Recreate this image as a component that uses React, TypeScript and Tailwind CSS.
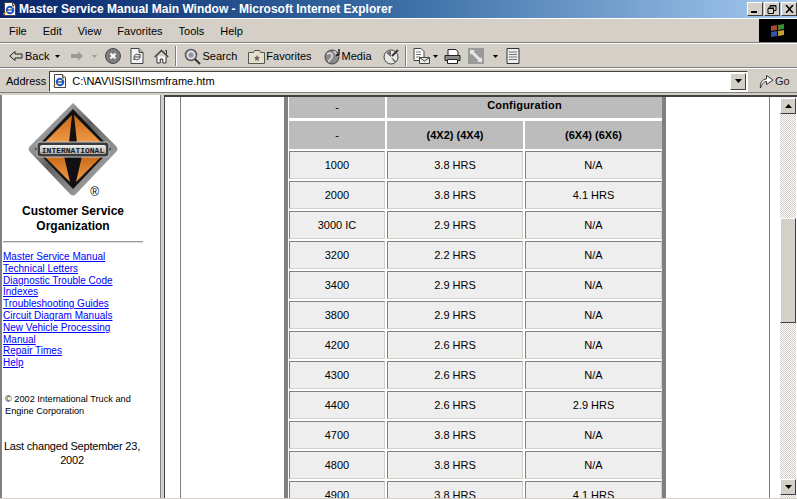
import type { ReactNode } from "react";

const IeLogo = () => (
  <svg width="16" height="16" viewBox="0 0 16 16" className="shrink-0">
    <path d="M2.500 1.500h8l3 3v10h-11z" fill="#fff" stroke="#444" />
    <path d="M10.500 1.500v3h3" fill="#ccc" stroke="#444" />
    <circle cx="8" cy="9" r="3.300" fill="none" stroke="#1858d0" strokeWidth="2" />
    <path d="M5 9h6" stroke="#1858d0" strokeWidth="1.500" />
    <path d="M1 13c4-1 9-6 12-9" fill="none" stroke="#e0a020" />
  </svg>
);

const links = [
  "Master Service Manual",
  "Technical Letters",
  "Diagnostic Trouble Code Indexes",
  "Troubleshooting Guides",
  "Circuit Diagram Manuals",
  "New Vehicle Processing Manual",
  "Repair Times",
  "Help",
];

const rows = [
  ["1000", "3.8 HRS", "N/A"],
  ["2000", "3.8 HRS", "4.1 HRS"],
  ["3000 IC", "2.9 HRS", "N/A"],
  ["3200", "2.2 HRS", "N/A"],
  ["3400", "2.9 HRS", "N/A"],
  ["3800", "2.9 HRS", "N/A"],
  ["4200", "2.6 HRS", "N/A"],
  ["4300", "2.6 HRS", "N/A"],
  ["4400", "2.6 HRS", "2.9 HRS"],
  ["4700", "3.8 HRS", "N/A"],
  ["4800", "3.8 HRS", "N/A"],
  ["4900", "3.8 HRS", "4.1 HRS"],
];

const raised = "border border-t-white border-l-white border-r-[#404040] border-b-[#404040] bg-[#d4d0c8]";

function WinButton({ children }: { children: ReactNode }) {
  return <div className={`w-[16px] h-[14px] flex items-center justify-center ${raised}`}>{children}</div>;
}

function Arrow({ dir }: { dir: "up" | "down" }) {
  return (
    <svg width="7" height="4" viewBox="0 0 7 4">
      <path d={dir === "up" ? "M3.500 0L7 4H0z" : "M0 0h7L3.500 4z"} fill="#000" />
    </svg>
  );
}

function Caret({ color = "#000", className }: { color?: string; className: string }) {
  return (
    <svg width="5" height="3" viewBox="0 0 5 3" className={`shrink-0 ${className}`}>
      <path d="M0 0h5L2.500 3z" fill={color} />
    </svg>
  );
}

function Separator({ className }: { className: string }) {
  return <div className={`${className} w-[2px] h-[20px] border-l border-l-[#808080] border-r border-r-white`} />;
}

function TitleBar() {
  return (
    <div className="h-[18px] shrink-0 flex items-center pl-[2px] bg-gradient-to-r from-[#0a246a] via-[#3a6ea5] to-[#a6caf0]">
      <IeLogo />
      <span className="ml-[1px] text-white font-bold text-[12px] leading-none whitespace-nowrap">
        Master Service Manual Main Window - Microsoft Internet Explorer
      </span>
      <div className="ml-auto flex">
        <WinButton>
          <div className="w-[6px] h-[2px] bg-black mt-[6px] mr-[3px]" />
        </WinButton>
        <div className="ml-[1px]">
          <WinButton>
            <svg width="10" height="9" viewBox="0 0 10 9" fill="none" stroke="#000">
              <path d="M3 2.500V.5h6v5H7M1 3.500h5.500v5H1z" />
              <path d="M3 1h6M1 3h6" />
            </svg>
          </WinButton>
        </div>
        <div className="ml-[1px]">
          <WinButton>
            <svg width="9" height="8" viewBox="0 0 9 8" stroke="#000" strokeWidth="1.500">
              <path d="M1 0l7 8M8 0L1 8" />
            </svg>
          </WinButton>
        </div>
      </div>
    </div>
  );
}

function MenuBar() {
  return (
    <div className="h-[25px] shrink-0 flex items-stretch border-t border-t-white border-b border-b-[#808080]">
      <div className="flex-1 flex items-center text-[11px] text-black pl-[9px] pt-[1px] gap-[16px]">
        <span>File</span>
        <span>Edit</span>
        <span>View</span>
        <span>Favorites</span>
        <span>Tools</span>
        <span>Help</span>
      </div>
      <div className="w-[38px] bg-black flex items-center justify-center">
        <svg width="16" height="15" viewBox="0 0 16 15">
          <path d="M1 3l6-1v5l-6 1z" fill="#a84a30" />
          <path d="M8 2l6-1v5l-6 1z" fill="#3f8a3a" />
          <path d="M1 9l6-1v5l-6 1z" fill="#3455a8" />
          <path d="M8 8l6-1v5l-6 1z" fill="#c8a030" />
        </svg>
      </div>
    </div>
  );
}

function ToolBar() {
  return (
    <div className="h-[25px] shrink-0 flex items-center border-t border-t-white border-b border-b-[#808080] text-[11px] text-black pl-[9px] pt-[1px]">
      <svg width="14" height="12" viewBox="0 0 14 12" fill="#d4d0c8" stroke="#222" className="shrink-0">
        <path d="M.8 6L6 1.500V4h7v4H6v2.500z" />
      </svg>
      <span className="ml-[2px]">Back</span>
      <Caret className="ml-[6px]" />
      {/* forward, greyed out */}
      <svg width="14" height="12" viewBox="0 0 14 12" fill="#9a9a9a" className="ml-[10px] shrink-0">
        <path d="M13.200 6L8 1.500V4H1v4h7v2.500z" />
      </svg>
      <Caret color="#999" className="ml-[8px]" />
      <svg width="16" height="16" viewBox="0 0 16 16" className="ml-[8px] shrink-0">
        <circle cx="8" cy="8" r="7.500" fill="#7d7d7d" stroke="#4a4a4a" />
        <path d="M5.500 5.500l5 5M10.500 5.500l-5 5" stroke="#fff" strokeWidth="2" />
      </svg>
      <svg width="14" height="16" viewBox="0 0 14 16" className="ml-[9px] shrink-0">
        <path d="M1 .5h8l4 4v11H1z" fill="#f4f4f4" stroke="#444" />
        <path d="M9 .5v4h4" fill="#bbb" stroke="#444" />
        <path d="M4 9a3 3 0 0 1 5-2l1-1v3H7M10 9a3 3 0 0 1-5 2l-1 1V9h3" fill="none" stroke="#444" />
      </svg>
      <svg width="15" height="15" viewBox="0 0 15 15" className="ml-[10px] shrink-0" fill="#fff" stroke="#333">
        <path d="M.8 8L7.500 1.500 14.200 8" fill="none" strokeWidth="1.300" />
        <path d="M3 7.500V14h3.200v-4h2.600v4H12V7.500" />
        <path d="M11 1.500h1.500V5" fill="none" />
      </svg>
      <Separator className="ml-[6px]" />
      <svg width="17" height="17" viewBox="0 0 17 17" className="ml-[7px] shrink-0" fill="none">
        <circle cx="7" cy="7" r="5.500" fill="#d8dce0" stroke="#555" strokeWidth="1.500" />
        <circle cx="7" cy="7" r="2.500" fill="#8f959c" />
        <path d="M11 11l5 5" stroke="#333" strokeWidth="2" />
      </svg>
      <span className="ml-[1px]">Search</span>
      <svg width="17" height="15" viewBox="0 0 17 15" className="ml-[11px] shrink-0">
        <path d="M.5 3.500h5l1-2h5l1 2h4v11H.5z" fill="#e4e0cc" stroke="#555" />
        <path d="M9 6l1 2 2 .3-1.500 1.500.4 2.200L9 11l-1.900 1 .4-2.200L6 8.300 8 8z" fill="#666" />
      </svg>
      <span className="ml-[1px]">Favorites</span>
      <svg width="18" height="17" viewBox="0 0 18 17" className="ml-[12px] shrink-0">
        <circle cx="8" cy="9" r="7" fill="#8a8a8a" stroke="#444" />
        <path d="M3 6c3-2 6 0 5 3S4 11 5 14M10 3c1 2 4 3 4 6" fill="none" stroke="#ddd" strokeWidth="1.600" />
        <path d="M15 1v6" stroke="#222" strokeWidth="1.500" />
        <circle cx="13.500" cy="7" r="1.500" fill="#222" />
      </svg>
      <span>Media</span>
      <svg width="17" height="17" viewBox="0 0 17 17" className="ml-[11px] shrink-0">
        <circle cx="8" cy="9" r="7" fill="#e8e8e8" stroke="#444" />
        <path d="M8 9L3.500 5A6 6 0 0 1 8 3zM8 9l3 5 2-1z" fill="#666" />
        <path d="M9 8l6-6" stroke="#333" strokeWidth="2" />
      </svg>
      <Separator className="ml-[5px]" />
      <svg width="17" height="16" viewBox="0 0 17 16" className="ml-[6px] shrink-0" fill="#fff" stroke="#444">
        <path d="M1 .5h7l3 3v9H1z" />
        <path d="M3 4h5M3 6.500h5M3 9h4" stroke="#777" />
        <path d="M6.500 9.500h10v6h-10z" fill="#e8e8e8" />
        <path d="M6.500 9.500l5 3.500 5-3.500" fill="none" />
      </svg>
      <Caret className="ml-[3px]" />
      <svg width="17" height="15" viewBox="0 0 17 15" className="ml-[6px] shrink-0" stroke="#222">
        <path d="M4 6V.5h8L14 3v3" fill="#fff" />
        <path d="M1 6.500h15v5H1z" fill="#8c8c8c" />
        <path d="M3.500 10.500h10v4h-10z" fill="#fff" />
      </svg>
      <svg width="16" height="16" viewBox="0 0 16 16" className="ml-[7px] shrink-0">
        <path d="M0 0h16v16H0z" fill="#9a9a9a" />
        <path d="M2 2h5L5.500 3.500l7 7L14 9v5H9l1.500-1.500-7-7L2 7z" fill="#e8e8e8" />
      </svg>
      <Caret className="ml-[9px]" />
      <svg width="15" height="16" viewBox="0 0 15 16" className="ml-[8px] shrink-0" fill="#eee" stroke="#333">
        <path d="M1 .5h12v15H1z" />
        <path d="M3 4h8M3 6.500h8M3 9h8M3 11.500h8" stroke="#777" />
      </svg>
    </div>
  );
}

function AddressBar() {
  return (
    <div className="h-[25px] shrink-0 flex items-center border-t border-t-white border-b border-b-[#808080] text-[11px] text-black pl-[6px] pt-[1px]">
      <span>Address</span>
      <div className="ml-[3px] flex-1 h-[21px] flex items-center bg-white border border-t-[#404040] border-l-[#404040] border-r-white border-b-white pl-[2px]">
        <IeLogo />
        <span className="ml-[4px]">C:\NAV\ISISII\msmframe.htm</span>
        <div className={`ml-auto mr-[1px] w-[16px] h-[17px] flex items-center justify-center ${raised}`}>
          <Arrow dir="down" />
        </div>
      </div>
      <div className="w-[49px] flex items-center pl-[11px] text-[#222]">
        <svg width="15" height="16" viewBox="0 0 15 16" fill="#fff" stroke="#333" className="shrink-0">
          <path d="M1.500 15c-1-5 2-9 6-9V2.500L14 7l-6.500 4.500V8.500c-3 0-4.500 2.500-6 6.500z" />
        </svg>
        <span className="ml-[1px]">Go</span>
      </div>
    </div>
  );
}

function Logo() {
  return (
    <svg width="90" height="94" viewBox="0 0 90 94" className="block">
      <defs>
        <linearGradient id="rim" x1="0" y1="0" x2="1" y2="1">
          <stop offset="0" stopColor="#e4e4e4" />
          <stop offset="0.45" stopColor="#5f5f5f" />
          <stop offset="1" stopColor="#c4c4c4" />
        </linearGradient>
        <linearGradient id="panel" x1="0" y1="0" x2="0" y2="1">
          <stop offset="0" stopColor="#c86a18" />
          <stop offset="1" stopColor="#f09a48" />
        </linearGradient>
        <linearGradient id="band" x1="0" y1="0" x2="0" y2="1">
          <stop offset="0" stopColor="#f0f0f0" />
          <stop offset="1" stopColor="#a8a8a8" />
        </linearGradient>
      </defs>
      <path d="M45 1L88 44Q91 47 88 50L48 92Q45 95 42 92L2 50Q-1 47 2 44z" fill="url(#rim)" />
      <path d="M45 7L83 47 45 87 7 47z" fill="#111" />
      <path d="M44 13L16 41H41zM46 13L74 41H49z" fill="url(#panel)" />
      <path d="M16 54H36L42 80zM74 54H54L48 80z" fill="url(#panel)" />
      <rect x="9" y="40" width="72" height="15" rx="3" fill="#3c3c3c" stroke="#c8c8c8" />
      <rect x="12" y="43" width="66" height="9" rx="2" fill="url(#band)" />
      <text x="45" y="50.500" textAnchor="middle" fontSize="8" fontWeight="700" fill="#1a1a1a" fontFamily="Liberation Mono, monospace">
        INTERNATIONAL
      </text>
    </svg>
  );
}

function LeftFrame() {
  return (
    <div className="w-[161px] shrink-0 border-l-2 border-l-[#808080] border-r border-r-[#808080] bg-white text-black pl-[1px] overflow-hidden">
      <div className="flex flex-col items-center w-[140px]">
        <div className="mt-[7px] mr-[1px]">
          <Logo />
        </div>
        <span className="self-end mr-[44px] -mt-[11px] text-[12px] leading-[14px]">®</span>
        <div className="mt-[5px] text-center font-bold text-[12px] leading-[15px]">
          Customer Service
          <br />
          Organization
        </div>
        <div className="mt-[7px] w-full h-[2px] bg-[#9a9a9a] border-b border-b-[#ddd]" />
      </div>
      <div className="mt-[8px] w-[122px] text-[10px] leading-[11.8px] text-[#0000ff]">
        {links.map((link) => (
          <a key={link} className="block underline">
            {link}
          </a>
        ))}
      </div>
      <div className="mt-[24px] ml-[2px] w-[136px] text-[9.200px] leading-[12px]">
        © 2002 International Truck and Engine Corporation
      </div>
      <div className="mt-[22px] -ml-[1px] w-[140px] text-center text-[11px] leading-[14px] tracking-[-0.2px]">
        Last changed September 23, 2002
      </div>
    </div>
  );
}

function HeaderCell({ children, bold, className }: { children: ReactNode; bold?: boolean; className: string }) {
  return (
    <div className={`${className} bg-[#bdbcbc] flex items-center justify-center text-[11px] ${bold ? "font-bold" : ""}`}>
      {children}
    </div>
  );
}

function Cell({ children, className }: { children: ReactNode; className: string }) {
  return (
    <div className={`${className} h-[28px] bg-[#eeeeee] border border-t-[#808080] border-l-[#808080] border-r-[#d4d0c8] border-b-[#d4d0c8] flex items-center justify-center text-[11px]`}>
      {children}
    </div>
  );
}

function TableFrame() {
  return (
    <div className="flex-1 min-w-0 flex bg-white border-l border-l-[#404040] border-t-2 border-t-[#404040] overflow-hidden text-black">
      <div className="w-[15px] shrink-0 border-r border-r-[#808080] box-content" />
      <div className="w-[103px] shrink-0" />
      <div className="w-[373px] shrink-0 border-x-[4px] border-x-[#808080] pl-[1px] box-content">
        <div className="flex gap-[2px] mb-[3px]">
          <HeaderCell className="w-[96px] h-[21px]">-</HeaderCell>
          <HeaderCell bold className="w-[275px] h-[21px] pb-[4px] tracking-[0.2px]">
            Configuration
          </HeaderCell>
        </div>
        <div className="flex gap-[2px] mb-[2px]">
          <HeaderCell className="w-[96px] h-[28px]">-</HeaderCell>
          <HeaderCell bold className="w-[136px] h-[28px]">
            (4X2) (4X4)
          </HeaderCell>
          <HeaderCell bold className="w-[137px] h-[28px]">
            (6X4) (6X6)
          </HeaderCell>
        </div>
        {rows.map((r) => (
          <div key={r[0]} className="flex gap-[2px] mb-[2px]">
            <Cell className="w-[96px]">{r[0]}</Cell>
            <Cell className="w-[136px]">{r[1]}</Cell>
            <Cell className="w-[137px]">{r[2]}</Cell>
          </div>
        ))}
      </div>
      <div className="w-[103px] shrink-0 border-r border-r-[#808080] box-content" />
      <div className="flex-1" />
      <div className="w-[16px] mr-[1px] shrink-0 flex flex-col bg-[repeating-conic-gradient(#d4d0c8_0_25%,#ffffff_0_50%)] bg-[length:2px_2px]">
        <div className={`mt-[1px] h-[16px] flex items-center justify-center ${raised}`}>
          <Arrow dir="up" />
        </div>
        <div className={`mt-[104px] h-[105px] shrink-0 ${raised}`} />
        <div className={`mt-auto mb-[3px] h-[16px] flex items-center justify-center ${raised}`}>
          <Arrow dir="down" />
        </div>
      </div>
    </div>
  );
}

export default function App() {
  return (
    <div className="w-[797px] h-[499px] overflow-hidden flex flex-col bg-[#d4d0c8] font-['Liberation_Sans',sans-serif]">
      <TitleBar />
      <MenuBar />
      <ToolBar />
      <AddressBar />
      <div className="flex-1 min-h-0 flex pt-[2px] pb-[1px] gap-[3px]">
        <LeftFrame />
        <TableFrame />
      </div>
    </div>
  );
}
